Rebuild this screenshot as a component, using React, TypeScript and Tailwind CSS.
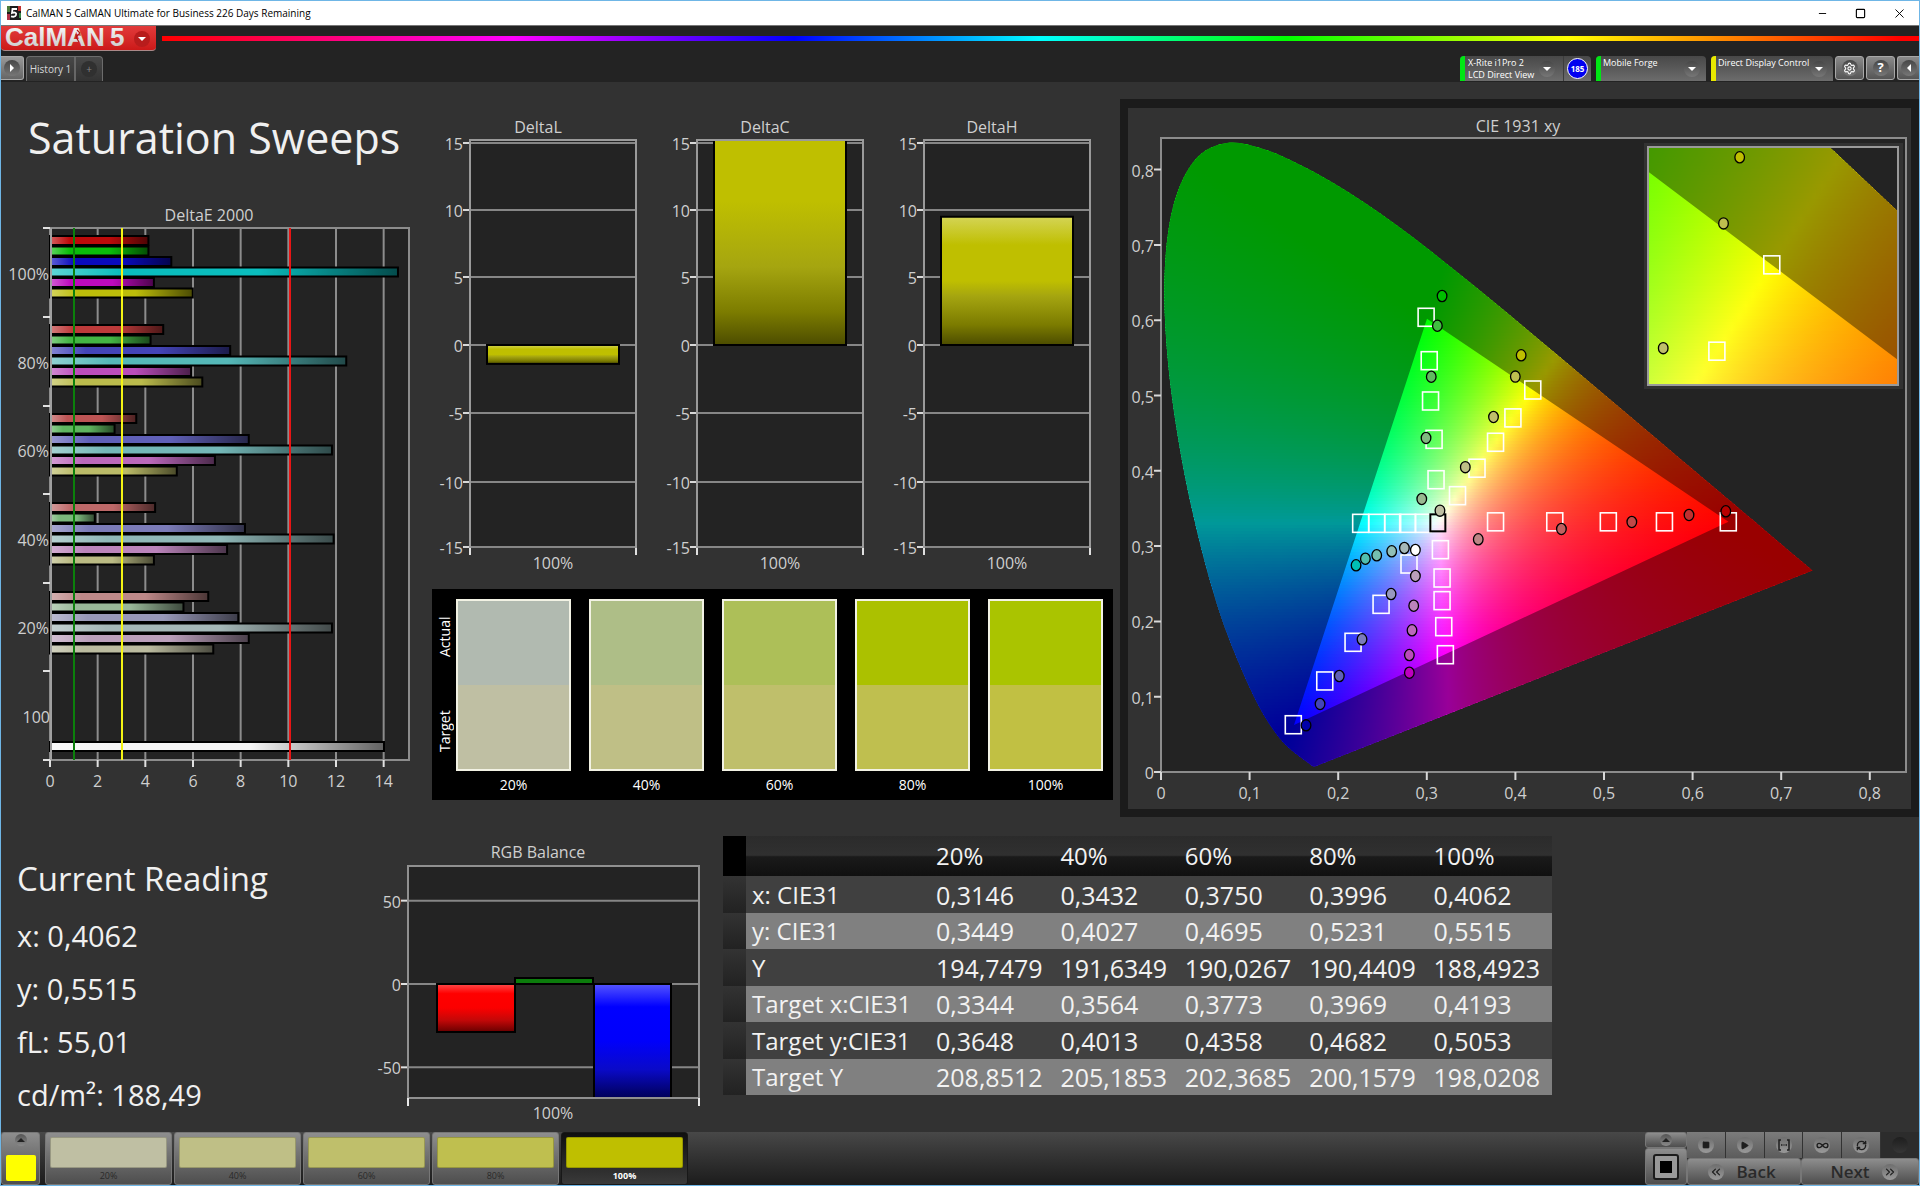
import React from "react";
import {
  ChevronsLeft,
  ChevronsRight,
  Infinity as InfinityIcon,
  Minus,
  Play,
  RefreshCw,
  Settings,
  Square,
  X,
} from "lucide-react";

const LEVELS = ["20%", "40%", "60%", "80%", "100%"];

/* ---------- data ---------- */

const deltaE = [
  {
    label: "100%",
    bars: [4.13, 4.13, 5.09, 14.6, 4.36, 5.99],
    colors: ["#bd0a0a", "#0abd0a", "#0a0abd", "#0abdbd", "#bd0abd", "#bdbd0a"],
  },
  {
    label: "80%",
    bars: [4.75, 4.22, 7.56, 12.43, 5.92, 6.39],
    colors: ["#bd3a3a", "#44b544", "#4444b8", "#55b8b8", "#bb4cbb", "#bbbb4c"],
  },
  {
    label: "60%",
    bars: [3.62, 2.71, 8.34, 11.83, 6.92, 5.32],
    colors: ["#bd5454", "#5fb55f", "#6060b8", "#74b8b8", "#bb68bb", "#bbbb68"],
  },
  {
    label: "40%",
    bars: [4.41, 1.88, 8.18, 11.9, 7.43, 4.36],
    colors: ["#bd6868", "#7cb87c", "#7b7bb8", "#90b8b8", "#bb84bb", "#bbbb84"],
  },
  {
    label: "20%",
    bars: [6.64, 5.6, 7.9, 11.83, 8.34, 6.85],
    colors: ["#bd8888", "#98b898", "#9898b8", "#a5b8b8", "#bb9fbb", "#bbbb9f"],
  },
];

const readings = ["x: 0,4062", "y: 0,5515", "fL: 55,01", "cd/m²: 188,49"];

const tableRows = [
  ["x: CIE31", "0,3146", "0,3432", "0,3750", "0,3996", "0,4062"],
  ["y: CIE31", "0,3449", "0,4027", "0,4695", "0,5231", "0,5515"],
  ["Y", "194,7479", "191,6349", "190,0267", "190,4409", "188,4923"],
  ["Target x:CIE31", "0,3344", "0,3564", "0,3773", "0,3969", "0,4193"],
  ["Target y:CIE31", "0,3648", "0,4013", "0,4358", "0,4682", "0,5053"],
  ["Target Y", "208,8512", "205,1853", "202,3685", "200,1579", "198,0208"],
];

const swatches = [
  { label: "20%", actual: "#b1bab0", target: "#bfbfa3" },
  { label: "40%", actual: "#aebe87", target: "#bfbf86" },
  { label: "60%", actual: "#adbf58", target: "#bfbf6b" },
  { label: "80%", actual: "#abc100", target: "#bfbf4f" },
  { label: "100%", actual: "#aac400", target: "#c1c043" },
];

const patterns = ["#bfbfa3", "#bfbf86", "#bfbf6b", "#bfbf4f", "#bfbf00"];

const targets: number[][] = [
  [0.299, 0.602], [0.3025, 0.5443], [0.304, 0.4907], [0.308, 0.4397], [0.3102, 0.386],
  [0.3344, 0.3648], [0.3564, 0.4013], [0.3773, 0.4358], [0.3969, 0.4682], [0.4193, 0.5053],
  [0.3773, 0.33], [0.4441, 0.33], [0.5045, 0.33], [0.5678, 0.33], [0.6398, 0.33],
  [0.2252, 0.328], [0.2433, 0.328], [0.2613, 0.328], [0.2782, 0.328], [0.2958, 0.328],
  [0.3151, 0.293], [0.317, 0.2553], [0.317, 0.2252], [0.3189, 0.1906], [0.3207, 0.1533],
  [0.2797, 0.2739], [0.2482, 0.2203], [0.2166, 0.1698], [0.1847, 0.1184], [0.1492, 0.0602],
];

const measured: [number, number, string][] = [
  [0.317, 0.6303, "#00bf00"], [0.3117, 0.5908, "#40bf40"], [0.3048, 0.523, "#60b960"],
  [0.2989, 0.4415, "#7fb97f"], [0.2941, 0.3604, "#98b890"],
  [0.4062, 0.5515, "#bfbf00"], [0.3996, 0.5231, "#bfbf4f"], [0.375, 0.4695, "#bfbf6b"],
  [0.3432, 0.4027, "#bfbf86"], [0.3146, 0.3449, "#bfbfa3"],
  [0.2745, 0.2952, "#a5b8b8"], [0.2602, 0.2908, "#90bfb8"], [0.2433, 0.2855, "#74bfb0"],
  [0.2305, 0.281, "#50bfb0"], [0.22, 0.2722, "#00bfb4"], [0.2869, 0.2926, "#ffffff"],
  [0.2869, 0.258, "#bb9fbb"], [0.285, 0.2185, "#bb84bb"], [0.2831, 0.1858, "#bb68bb"],
  [0.2801, 0.1529, "#bb4cbb"], [0.2801, 0.1294, "#bf00bf"],
  [0.2595, 0.234, "#9898bf"], [0.2267, 0.1738, "#7b7bbb"], [0.2011, 0.125, "#6060b8"],
  [0.1794, 0.0878, "#4444b8"], [0.1636, 0.0594, "#0000a8"],
  [0.3578, 0.3068, "#bd8686"], [0.4516, 0.3205, "#c06060"], [0.531, 0.3298, "#c04848"],
  [0.5955, 0.3391, "#c03030"], [0.637, 0.344, "#b80000"],
];

/* ---------- CIE colour maths ---------- */

const locus: number[][] = [
  [0.1741, 0.005], [0.1714, 0.0051], [0.1644, 0.0109], [0.1566, 0.0177], [0.144, 0.0297],
  [0.1355, 0.0399], [0.1241, 0.0578], [0.1096, 0.0868], [0.0913, 0.1327], [0.0687, 0.2007],
  [0.0454, 0.295], [0.0235, 0.4127], [0.0082, 0.5384], [0.0039, 0.6548], [0.0139, 0.7502],
  [0.0389, 0.812], [0.0743, 0.8338], [0.1142, 0.8262], [0.1547, 0.8059], [0.1929, 0.7816],
  [0.2296, 0.7543], [0.2658, 0.7243], [0.3016, 0.6923], [0.3373, 0.6589], [0.3731, 0.6245],
  [0.4087, 0.5896], [0.4441, 0.5547], [0.4788, 0.5202], [0.5125, 0.4866], [0.5448, 0.4544],
  [0.5752, 0.4242], [0.6029, 0.3965], [0.627, 0.3725], [0.6658, 0.334], [0.6915, 0.3083],
  [0.719, 0.2809], [0.7347, 0.2653],
];

const gamut = [[0.64, 0.33], [0.3, 0.6], [0.15, 0.06]];

function xyToRgb(x: number, y: number) {
  const z = 1 - x - y;
  const lin = [
    3.2406 * x - 1.5372 * y - 0.4986 * z,
    -0.9689 * x + 1.8758 * y + 0.0415 * z,
    0.0557 * x - 0.204 * y + 1.057 * z,
  ].map((v) => Math.max(v, 0));
  const top = Math.max(...lin, 0.0001);
  const [r, g, b] = lin.map((v) => Math.round((255 * v) / top));
  return `rgb(${r},${g},${b})`;
}

type Scale = { left: number; top: number; width: number; height: number; x0: number; x1: number; y0: number; y1: number };

const toPx = (s: Scale, x: number) => s.left + ((x - s.x0) / (s.x1 - s.x0)) * s.width;
const toPy = (s: Scale, y: number) => s.top + ((s.y1 - y) / (s.y1 - s.y0)) * s.height;

// Catmull-Rom through the spectral locus, closed by the purple line
function locusPath(s: Scale) {
  const p = locus.map(([x, y]) => [toPx(s, x), toPy(s, y)]);
  let d = `M${p[0][0]},${p[0][1]}`;
  for (let i = 0; i < p.length - 1; i++) {
    const a = p[Math.max(i - 1, 0)];
    const b = p[i];
    const c = p[i + 1];
    const e = p[Math.min(i + 2, p.length - 1)];
    d += `C${b[0] + (c[0] - a[0]) / 6},${b[1] + (c[1] - a[1]) / 6} ${c[0] - (e[0] - b[0]) / 6},${c[1] - (e[1] - b[1]) / 6} ${c[0]},${c[1]}`;
  }
  return d + "Z";
}

function gamutPath(s: Scale) {
  return "M" + gamut.map(([x, y]) => `${toPx(s, x)},${toPy(s, y)}`).join("L") + "Z";
}

function ColorField({ id, scale, step }: { id: string; scale: Scale; step: number }) {
  const rows = Math.ceil(scale.height / step);
  const cols = Math.ceil(scale.width / 7);
  const list = Array.from({ length: rows }, (_, i) => i);
  const stops = Array.from({ length: cols + 1 }, (_, i) => i / cols);
  return (
    <g clipPath={`url(#${id}-box)`}>
      <defs>
        <clipPath id={`${id}-box`}>
          <rect x={scale.left} y={scale.top} width={scale.width} height={scale.height} />
        </clipPath>
        <clipPath id={`${id}-locus`}>
          <path d={locusPath(scale)} />
        </clipPath>
        {list.map((r) => {
          const y = scale.y1 - (((r + 0.5) * step) / scale.height) * (scale.y1 - scale.y0);
          return (
            <linearGradient key={r} id={`${id}-${r}`}>
              {stops.map((t) => (
                <stop key={t} offset={t} stopColor={xyToRgb(scale.x0 + t * (scale.x1 - scale.x0), y)} />
              ))}
            </linearGradient>
          );
        })}
      </defs>
      <g clipPath={`url(#${id}-locus)`}>
        {list.map((r) => (
          <rect
            key={r}
            x={scale.left}
            y={scale.top + r * step}
            width={scale.width}
            height={step + 1}
            fill={`url(#${id}-${r})`}
          />
        ))}
        <path d={locusPath(scale) + gamutPath(scale)} fillRule="evenodd" fill="#000" opacity={0.4} />
      </g>
    </g>
  );
}

function Markers({ scale }: { scale: Scale }) {
  const inside = ([x, y]: (number | string)[]) =>
    +x > scale.x0 && +x < scale.x1 && +y > scale.y0 && +y < scale.y1;
  return (
    <g>
      {targets.filter(inside).map(([x, y], i) => (
        <rect
          key={i}
          x={toPx(scale, x) - 8}
          y={toPy(scale, y) - 9}
          width={16}
          height={18}
          fill="none"
          stroke="#fff"
          strokeWidth={1.6}
        />
      ))}
      {inside([0.3128, 0.328]) && (
        <rect
          x={toPx(scale, 0.3128) - 8}
          y={toPy(scale, 0.328) - 9}
          width={15}
          height={17}
          fill="none"
          stroke="#000"
          strokeWidth={2}
        />
      )}
      {measured.filter(inside).map(([x, y, fill], i) => (
        <ellipse
          key={i}
          cx={toPx(scale, x)}
          cy={toPy(scale, y)}
          rx={4.8}
          ry={5.6}
          fill={fill}
          stroke="#000"
          strokeWidth={1.3}
        />
      ))}
    </g>
  );
}

/* ---------- charts ---------- */

const axisText = "fill-[#cfcfcf] text-[16px]";

function DeltaEChart() {
  const x = (v: number) => 50 + v * 24 - v / 6;
  return (
    <svg viewBox="1 0 431 600" className="w-full block">
      <defs>
        <linearGradient id="shine">
          <stop offset="0" stopColor="#fff" stopOpacity={0.35} />
          <stop offset="0.2" stopColor="#fff" stopOpacity={0} />
          <stop offset="0.6" stopColor="#000" stopOpacity={0} />
          <stop offset="1" stopColor="#000" stopOpacity={0.6} />
        </linearGradient>
      </defs>
      <text x={209} y={15} textAnchor="middle" dominantBaseline="central" className={axisText}>
        DeltaE 2000
      </text>
      <rect x={50} y={28} width={359} height={532} fill="#232323" stroke="#8c8c8c" strokeWidth={2} />
      {[0, 2, 4, 6, 8, 10, 12, 14].map((v) => (
        <g key={v}>
          <path d={`M${x(v)},28V560`} stroke="#8c8c8c" strokeWidth={2} />
          <path d={`M${x(v)},560v7`} stroke="#e0e0e0" strokeWidth={2} />
          <text x={x(v)} y={581} textAnchor="middle" dominantBaseline="central" className={axisText}>
            {v}
          </text>
        </g>
      ))}
      {[28, 117, 206, 294, 383, 471, 560].map((y) => (
        <path key={y} d={`M43,${y}h7`} stroke="#e0e0e0" strokeWidth={2} />
      ))}
      {deltaE.map((group, g) => (
        <g key={group.label}>
          <text x={49} y={74 + g * 88.6} textAnchor="end" dominantBaseline="central" className={axisText}>
            {group.label}
          </text>
          {group.bars.map((v, i) => {
            const box = { x: 50, y: 36 + g * 89 + i * 10.5, width: x(v) - 50, height: 9 };
            return (
              <g key={i}>
                <rect {...box} fill={group.colors[i]} />
                <rect {...box} fill="url(#shine)" stroke="#000" strokeWidth={2} />
              </g>
            );
          })}
        </g>
      ))}
      <text x={50} y={517} textAnchor="end" dominantBaseline="central" className={axisText}>
        100
      </text>
      <rect x={50} y={542} width={334} height={9} fill="#f4f4f4" />
      <rect x={50} y={542} width={334} height={9} fill="url(#shine)" stroke="#000" strokeWidth={2} />
      <path d="M51,28V560" stroke="#a0a0a0" strokeWidth={2} />
      <path d="M74,28V560" stroke="#0b800b" strokeWidth={2} />
      <path d="M122,28V560" stroke="#f4f414" strokeWidth={2} />
      <path d="M290,28V560" stroke="#e81414" strokeWidth={2} />
    </svg>
  );
}

const deltaTicks = [
  { v: 15, y: 43 },
  { v: 10, y: 110 },
  { v: 5, y: 177 },
  { v: 0, y: 245 },
  { v: -5, y: 313 },
  { v: -10, y: 382 },
  { v: -15, y: 447 },
];

function DeltaChart({ title, value }: { title: string; value: number }) {
  const y = (v: number) => 245 - v * 13.5;
  const top = value > 0 ? Math.max(y(value), 40) : 245;
  const height = value > 0 ? 245 - top : y(value) - 245;
  const overflow = value > 15;
  return (
    <svg viewBox="0 0 227 480" className="w-1/3 block">
      <defs>
        <linearGradient id={`fill-${title}`} x1="0" y1="0" x2="0" y2="1">
          <stop offset="0" stopColor={overflow ? "#bfbf00" : "#d4d455"} />
          <stop offset="0.22" stopColor="#bfbf00" />
          <stop offset={overflow ? 0.3 : 0.5} stopColor="#bfbf00" />
          <stop offset="0.62" stopColor="#a5a510" />
          <stop offset="0.84" stopColor="#7c7c00" />
          <stop offset="1" stopColor="#4c4c00" />
        </linearGradient>
      </defs>
      <text x={106} y={27} textAnchor="middle" dominantBaseline="central" className={axisText}>
        {title}
      </text>
      <rect x={38} y={40} width={166} height={408} fill="#232323" />
      {deltaTicks.map((t) => (
        <g key={t.v}>
          <path d={`M38,${t.y}H204`} stroke="#868686" strokeWidth={2} />
          <path d={`M31,${t.y}h7`} stroke="#d8d8d8" strokeWidth={2} />
          <text x={31} y={t.y + 1} textAnchor="end" dominantBaseline="central" className={axisText}>
            {t.v}
          </text>
        </g>
      ))}
      <rect x={55} y={top} width={132} height={height} fill={`url(#fill-${title})`} stroke="#000" strokeWidth={2} />
      <path d="M38,455V40H204V455" fill="none" stroke="#9a9a9a" strokeWidth={2} />
      <path d="M38,448v7M204,448v7" stroke="#e0e0e0" strokeWidth={2} />
      <text x={121} y={463} textAnchor="middle" dominantBaseline="central" className={axisText}>
        100%
      </text>
    </svg>
  );
}

function RgbBalance() {
  return (
    <svg viewBox="0 0 340 300" className="w-full block">
      <defs>
        <linearGradient id="red" x1="0" y1="0" x2="0" y2="1">
          <stop offset="0" stopColor="#ff4a4a" />
          <stop offset="0.2" stopColor="#ff0000" />
          <stop offset="0.5" stopColor="#fb0000" />
          <stop offset="0.75" stopColor="#c40808" />
          <stop offset="1" stopColor="#680000" />
        </linearGradient>
        <linearGradient id="blue" x1="0" y1="0" x2="0" y2="1">
          <stop offset="0" stopColor="#5555ff" />
          <stop offset="0.2" stopColor="#0000ff" />
          <stop offset="0.5" stopColor="#0000fb" />
          <stop offset="0.75" stopColor="#0a0ac8" />
          <stop offset="1" stopColor="#000058" />
        </linearGradient>
      </defs>
      <text x={166} y={23} textAnchor="middle" dominantBaseline="central" className={axisText}>
        RGB Balance
      </text>
      <rect x={36} y={37} width={291} height={232} fill="#232323" />
      {[50, 0, -50].map((v) => {
        const y = 155 - (v * 5) / 3;
        return (
          <g key={v}>
            <path d={`M36,${y}H327`} stroke="#868686" strokeWidth={2} />
            <path d={`M29,${y}h7`} stroke="#e0e0e0" strokeWidth={2} />
            <text x={29} y={y + 1} textAnchor="end" dominantBaseline="central" className={axisText}>
              {v}
            </text>
          </g>
        );
      })}
      <rect x={65} y={155} width={78} height={48} fill="url(#red)" stroke="#000" strokeWidth={2} />
      <rect x={143} y={149} width={78} height={6} fill="#0c7c0c" stroke="#000" strokeWidth={2} />
      <rect x={222} y={155} width={77} height={114} fill="url(#blue)" stroke="#000" strokeWidth={2} />
      <rect x={36} y={37} width={291} height={232} fill="none" stroke="#909090" strokeWidth={2} />
      <path d="M36,269v8M327,269v8" stroke="#e8e8e8" strokeWidth={2} />
      <text x={181} y={284} textAnchor="middle" dominantBaseline="central" className={axisText}>
        100%
      </text>
    </svg>
  );
}

const mainScale: Scale = { left: 34, top: 30, width: 665, height: 632, x0: 0, x1: 0.75, y0: 0, y1: 0.8404 };
const insetScale: Scale = { left: 522, top: 40, width: 249, height: 236, x0: 0.3692, x1: 0.4708, y0: 0.4541, y1: 0.5555 };

function CieChart() {
  return (
    <svg viewBox="1 0 783 701" className="w-full block bg-[#323232]">
      <text x={391} y={18} textAnchor="middle" dominantBaseline="central" className={axisText}>
        CIE 1931 xy
      </text>
      <rect x={34} y={30} width={745} height={634} fill="#232323" stroke="#8c8c8c" strokeWidth={2} />
      {[0, 1, 2, 3, 4, 5, 6, 7, 8].map((n) => {
        const label = n === 0 ? "0" : `0,${n}`;
        const x = 34 + n * 88.6;
        const y = 664 - n * 75.3;
        return (
          <g key={n}>
            <path d={`M${x},664v8M27,${y}h7`} stroke="#d8d8d8" strokeWidth={2} />
            <text x={x} y={685} textAnchor="middle" dominantBaseline="central" className={axisText}>
              {label}
            </text>
            <text x={27} y={y + 1} textAnchor="end" dominantBaseline="central" className={axisText}>
              {label}
            </text>
          </g>
        );
      })}
      <ColorField id="cie" scale={mainScale} step={3} />
      <Markers scale={mainScale} />
      <rect x={517} y={35} width={259} height={246} fill="#323232" />
      <rect x={521} y={39} width={251} height={238} fill="#232323" />
      <ColorField id="zoomed" scale={insetScale} step={3} />
      <rect x={521} y={39} width={250} height={238} fill="none" stroke="#9a9a9a" strokeWidth={2} />
      <Markers scale={insetScale} />
    </svg>
  );
}

/* ---------- window chrome ---------- */

const knobTones = {
  dark: "size-4 from-[#474747] to-[#777] text-white",
  light: "size-4 from-[#6e6e6e] to-[#9a9a9a] text-[#1e1e1e]",
  small: "size-3 from-[#555] to-[#8a8a8a]",
  off: "size-4 from-[#1e1e1e] to-[#363636]",
};

function Knob({ children, tone = "dark" }: { children?: React.ReactNode; tone?: keyof typeof knobTones }) {
  return (
    <span className={`flex items-center justify-center shrink-0 rounded-full bg-linear-to-b ${knobTones[tone]}`}>
      {children}
    </span>
  );
}

function Arrow({ dir = "down", color = "#fff" }: { dir?: "down" | "up" | "left" | "right"; color?: string }) {
  const d = {
    down: "M0,2H8L4,6Z",
    up: "M0,6H8L4,2Z",
    left: "M6,0V8L2,4Z",
    right: "M2,0V8L6,4Z",
  }[dir];
  return (
    <svg viewBox="0 0 8 8" className="size-2">
      <path d={d} fill={color} />
    </svg>
  );
}

function TitleBar() {
  return (
    <header className="flex items-center h-[25px] bg-white text-black border-b border-[#777]">
      <svg viewBox="0 0 14 14" className="size-[14px] ml-[6px] mr-[5px]">
        <rect width="14" height="14" fill="#1c1c1c" />
        <path d="M0,0h3v6h-3z" fill="#4a7a3a" />
        <path d="M0,8h3v6h-3z" fill="#b03048" />
        <path d="M11,0h3v5h-3z" fill="#c03030" />
        <path d="M12,7h2v5h-2z" fill="#3a8a4a" />
        <path d="M10,3H5.5L5,7C8,5.800 9.800,7 9,9C8.300,11 6,11 4,10.300" fill="none" stroke="#fff" strokeWidth="1.800" />
      </svg>
      <h1 className="flex-1 text-[10px]">CalMAN 5 CalMAN Ultimate for Business 226 Days Remaining</h1>
      <div className="flex items-center">
        <button aria-label="Minimize" className="w-[38px] flex justify-center"><Minus size={11} strokeWidth={2} /></button>
        <button aria-label="Maximize" className="w-[38px] flex justify-center"><Square size={11} strokeWidth={2.500} /></button>
        <button aria-label="Close" className="w-[40px] flex justify-center"><X size={15} strokeWidth={1.500} /></button>
      </div>
    </header>
  );
}

function Toolbar() {
  const selectBox = "relative flex h-[25px] rounded-t-sm overflow-hidden bg-linear-to-b from-[#484848] to-[#6c6c6c]";
  const selectText = "appearance-none bg-transparent w-full pl-[2px] pr-5 pb-3 text-[9px] leading-3 text-white font-medium";
  const square = "flex items-center justify-center w-[29px] h-6 rounded-[3px] border border-[#a8a8a8] bg-linear-to-b from-[#8a8a8a] to-[#555]";
  return (
    <div className="bg-[#232323]">
      <div className="flex h-[30px]">
        <button className="flex items-center w-[155px] h-[25px] rounded-b-sm bg-linear-to-b from-[#e23a3a] to-[#cc1818] border-b border-[#a88]">
          <svg viewBox="0 0 155 25" className="w-[155px] h-[25px] overflow-visible">
            <defs>
              <linearGradient id="silver" x1="0" y1="0" x2="0" y2="1">
                <stop offset="0" stopColor="#fff" />
                <stop offset="1" stopColor="#c4c4c4" />
              </linearGradient>
            </defs>
            <g fill="url(#silver)" className="font-['Liberation_Sans'] text-[26px] font-bold">
              <text x="4" y="20">CalMAN</text>
              <text x="109" y="20">5</text>
            </g>
            <path d="M76,4l3,3l-4,4l3,5M74,9l6,0" stroke="#b01818" strokeWidth="1.200" fill="none" />
            <circle cx="141" cy="13" r="8" fill="#b81c1c" />
            <path d="M137,11h8l-4,4z" fill="#fff" />
          </svg>
        </button>
        <div className="flex-1 h-[5px] mt-[10px] ml-[6px] bg-[linear-gradient(90deg,#f00_0%,#f0f_20%,#00f_36%,#0ff_50%,#0f0_64%,#ff0_80%,#f00_99%)]" />
      </div>
      <div className="flex h-[26px] items-start text-[#d8d8d8]">
        <button aria-label="Expand" className="flex items-center justify-center w-[23px] h-6 rounded-r-[3px] border border-l-0 border-[#a8a8a8] bg-linear-to-b from-[#999] to-[#666]">
          <Knob><Arrow dir="right" /></Knob>
        </button>
        <nav className="flex ml-[2px] h-[25px] rounded-t-sm border border-b-0 border-[#6c6c6c] bg-linear-to-b from-[#484848] to-[#333] text-[10px]">
          <a href="#history" className="w-[49px] leading-6 text-center border-r-2 border-[#666] whitespace-nowrap">History 1</a>
          <button aria-label="Add tab" className="flex items-center justify-center w-[26px] text-[#888]">
            <span className="size-4 rounded-full bg-[#303030] leading-4">+</span>
          </button>
        </nav>
        <div className="flex-1" />
        <div className="flex text-[9px]">
          <div className={`${selectBox} w-[131px]`}>
            <span className="w-[5px] bg-[#00e614]" />
            <button className="flex flex-1 items-center justify-between pl-[3px] pr-2 text-left leading-3 text-white border-r border-[#3c3c3c] whitespace-nowrap">
              <span>X-Rite i1Pro 2<br />LCD Direct View</span>
              <Knob><Arrow /></Knob>
            </button>
            <span className="flex items-center justify-center w-[27px]">
              <span className="flex items-center justify-center size-[21px] rounded-full border border-white bg-[#0000f0] text-[8px] font-bold text-white">185</span>
            </span>
          </div>
          <label className={`${selectBox} w-[110px] ml-[5px]`}>
            <span className="w-[5px] shrink-0 bg-[#00e614]" />
            <select aria-label="Source" className={selectText}>
              <option>Mobile Forge</option>
            </select>
            <span className="absolute right-[6px] top-[5px]"><Knob><Arrow /></Knob></span>
          </label>
          <label className={`${selectBox} w-[122px] ml-[5px]`}>
            <span className="w-[5px] shrink-0 bg-[#e8e800]" />
            <select aria-label="Display" className={selectText}>
              <option>Direct Display Control</option>
            </select>
            <span className="absolute right-[6px] top-[5px]"><Knob><Arrow /></Knob></span>
          </label>
          <div className="flex gap-[2px] ml-[2px] text-white">
            <button aria-label="Settings" className={square}><Knob><Settings size={13} /></Knob></button>
            <button aria-label="Help" className={`${square} text-[13px] font-bold`}><Knob>?</Knob></button>
            <button aria-label="Collapse" className="flex items-center justify-center w-[22px] h-6 rounded-l-[3px] border border-r-0 border-[#a8a8a8] bg-linear-to-b from-[#8a8a8a] to-[#555]">
              <Knob><Arrow dir="left" /></Knob>
            </button>
          </div>
        </div>
      </div>
    </div>
  );
}

function SwatchPanel() {
  return (
    <section className="flex mt-[9px] h-[211px] bg-black text-white">
      <div className="flex flex-col w-6 h-[190px] items-center text-[14px] font-medium">
        <span className="flex-1 flex items-center justify-center [writing-mode:vertical-rl] rotate-180">Actual</span>
        <span className="flex-1 flex items-center justify-center [writing-mode:vertical-rl] rotate-180">Target</span>
      </div>
      <div className="flex flex-1 justify-between pt-[10px] pr-[10px]">
        {swatches.map((s) => (
          <figure key={s.label} className="w-[115px]">
            <div className="h-[172px] border-2 border-[#f2f2e4]">
              <div className="h-1/2" style={{ background: s.actual }} />
              <div className="h-1/2" style={{ background: s.target }} />
            </div>
            <figcaption className="text-center text-[14px] leading-7">{s.label}</figcaption>
          </figure>
        ))}
      </div>
    </section>
  );
}

function ReadingTable() {
  return (
    <table className="table-fixed w-full max-w-[829px] mt-[7px] text-[25px] leading-8 text-left text-[#f2f2f2]">
      <colgroup>
        <col className="w-[23px]" />
        <col className="w-[184px]" />
        <col span={5} />
      </colgroup>
      <thead>
        <tr className="h-10 bg-[linear-gradient(180deg,#2b2b2b_0%,#303030_48%,#1a1a1a_52%,#101010_100%)] text-[24px]">
          <td className="bg-black" />
          <td />
          {LEVELS.map((l) => (
            <th key={l} className="font-normal pl-[6px]">{l}</th>
          ))}
        </tr>
      </thead>
      <tbody>
        {tableRows.map((row) => (
          <tr key={row[0]} className="h-9 odd:bg-[#404040] even:bg-[#808080] odd:h-[37px]">
            <td className="bg-linear-to-b from-[#333] to-[#222]" />
            <th className="font-normal pl-[6px] whitespace-nowrap text-[24px]">{row[0]}</th>
            {row.slice(1).map((v, i) => (
              <td key={i} className="pl-[6px]">{v}</td>
            ))}
          </tr>
        ))}
      </tbody>
    </table>
  );
}

function BottomBar() {
  const tile = "rounded-[3px] bg-linear-to-b from-[#8e8e8e] to-[#4e4e4e] border border-[#777]";
  const tool = "flex flex-1 items-center justify-center bg-linear-to-b from-[#7c7c7c] to-[#5c5c5c] border-r border-[#333]";
  return (
    <footer className="flex h-[53px] bg-linear-to-b from-[#484848] to-[#1c1c1c]">
      <button aria-label="Pattern color" className={`${tile} flex flex-col items-center justify-between w-[39px] pt-px pb-[3px]`}>
        <Knob tone="small"><Arrow dir="up" color="#222" /></Knob>
        <span className="w-[30px] h-[26px] rounded-xs bg-[#ffff00]" />
      </button>
      <div className="flex ml-[5px] gap-[2px]">
        {patterns.map((color, i) => (
          <button
            key={color}
            className={
              i === 4
                ? "flex flex-col w-[127px] px-1 pt-[4px] rounded-[3px] border border-[#181818] bg-linear-to-b from-[#101010] to-[#3a3a3a] text-white font-bold"
                : "flex flex-col w-[127px] px-1 pt-[4px] rounded-[3px] border border-[#777] bg-linear-to-b from-[#8e8e8e] to-[#4e4e4e] text-[#2a2a2a]"
            }
          >
            <span className="block w-full h-[31px] rounded-xs border border-black/20" style={{ background: color }} />
            <span className="block w-full text-center text-[9px] leading-4">{LEVELS[i]}</span>
          </button>
        ))}
      </div>
      <div className="flex-1" />
      <div className="flex flex-col w-[42px]">
        <button aria-label="Show patterns" className={`${tile} flex h-4 items-center justify-center`}>
          <Knob tone="small"><Arrow dir="up" color="#222" /></Knob>
        </button>
        <button aria-label="Pattern window" className={`${tile} flex flex-1 items-center justify-center`}>
          <span className="flex items-center justify-center size-[26px] rounded-[3px] border-2 border-[#1c1c1c] bg-[#999]">
            <span className="size-3 bg-black" />
          </span>
        </button>
      </div>
      <div className="flex flex-col w-[232px]">
        <div className="flex h-[26px]">
          <button aria-label="Stop" className={tool}><Knob tone="light"><Square size={8} fill="currentColor" /></Knob></button>
          <button aria-label="Play" className={tool}><Knob tone="light"><Play size={9} fill="currentColor" /></Knob></button>
          <button aria-label="Step" className={tool}>
            <Knob tone="light">
              <svg viewBox="0 0 12 12" className="size-3" fill="none" stroke="currentColor" strokeWidth="1.500">
                <path d="M3,1H1V11H3M9,1H11V11H9M3,6H4.500M5.500,6H6.500M7.500,6H9" />
              </svg>
            </Knob>
          </button>
          <button aria-label="Continuous" className={tool}><Knob tone="light"><InfinityIcon size={13} strokeWidth={2.500} /></Knob></button>
          <button aria-label="Refresh" className={tool}><Knob tone="light"><RefreshCw size={11} strokeWidth={3} /></Knob></button>
          <button aria-label="Record" className="flex flex-1 items-center justify-center bg-[#2c2c2c]"><Knob tone="off" /></button>
        </div>
        <div className="flex flex-1 text-[17px] leading-6 font-semibold text-[#2a2a2a]">
          <button className={`${tile} flex flex-1 items-center justify-center gap-3 pr-1`}>
            <Knob tone="light"><ChevronsLeft size={14} /></Knob>Back
          </button>
          <button className={`${tile} flex flex-1 items-center justify-center gap-3 pl-2`}>
            Next<Knob tone="light"><ChevronsRight size={14} /></Knob>
          </button>
        </div>
      </div>
    </footer>
  );
}

export default function App() {
  return (
    <div className="flex flex-col min-h-screen border border-[#6fb6e6] bg-[#323232] font-['Open_Sans','Noto_Sans',sans-serif] text-[#f0f0f0]">
      <TitleBar />
      <Toolbar />
      <main className="flex-1">
        <div className="grid grid-cols-[431fr_688fr_799fr] items-start">
          <section>
            <h2 className="mt-[26px] mb-8 ml-[27px] text-[43px] leading-[60px] whitespace-nowrap">Saturation Sweeps</h2>
            <DeltaEChart />
          </section>
          <section className="pt-[18px] pr-[7px]">
            <div className="flex">
              <DeltaChart title="DeltaL" value={-1.4} />
              <DeltaChart title="DeltaC" value={16} />
              <DeltaChart title="DeltaH" value={9.5} />
            </div>
            <SwatchPanel />
          </section>
          <section className="mt-[17px] border-8 border-t-9 border-[#1b1b1b]">
            <CieChart />
          </section>
        </div>
        <div className="grid grid-cols-[371fr_351fr_1196fr] mt-3 items-start">
          <section className="pl-4 pt-[30px]">
            <h2 className="text-[33px] leading-10">Current Reading</h2>
            <ul className="pt-[10px] text-[29px] leading-[53px]">
              {readings.map((r) => (
                <li key={r}>{r}</li>
              ))}
            </ul>
          </section>
          <div className="pr-[11px]">
            <RgbBalance />
          </div>
          <ReadingTable />
        </div>
      </main>
      <BottomBar />
    </div>
  );
}
